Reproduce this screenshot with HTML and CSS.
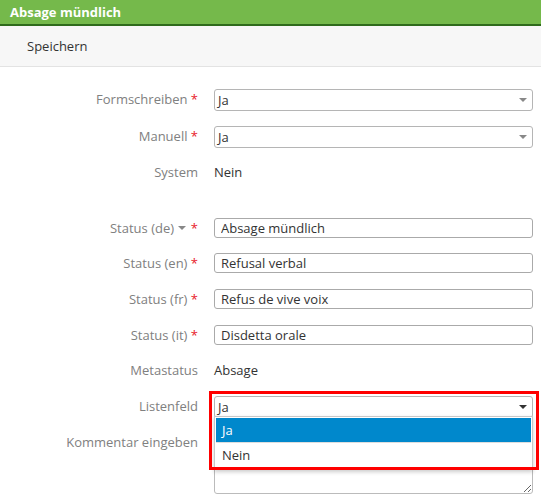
FILE: index.html
```html
<!DOCTYPE html>
<html lang="de">
<head>
  <meta charset="UTF-8">
  <title>Absage mündlich</title>
  <link rel="stylesheet" href="styles.css">
</head>
<body>

  <div class="panel">
    <div class="panel-title">Absage mündlich</div>

    <div class="toolbar">
      <span class="toolbar-btn">Speichern</span>
    </div>

    <div class="form">
      <label class="label">Formschreiben <span class="req">*</span></label>
      <div class="field">
        <div class="select"><span>Ja</span><i class="arrow"></i></div>
      </div>

      <label class="label">Manuell <span class="req">*</span></label>
      <div class="field">
        <div class="select"><span>Ja</span><i class="arrow"></i></div>
      </div>

      <label class="label">System</label>
      <div class="field value">Nein</div>

      <div class="spacer"></div>

      <label class="label">Status (de) <i class="caret"></i> <span class="req">*</span></label>
      <div class="field"><input class="input" type="text" value="Absage mündlich"></div>

      <label class="label">Status (en) <span class="req">*</span></label>
      <div class="field"><input class="input" type="text" value="Refusal verbal"></div>

      <label class="label">Status (fr) <span class="req">*</span></label>
      <div class="field"><input class="input" type="text" value="Refus de vive voix"></div>

      <label class="label">Status (it) <span class="req">*</span></label>
      <div class="field"><input class="input" type="text" value="Disdetta orale"></div>

      <label class="label">Metastatus</label>
      <div class="field value">Absage</div>

      <label class="label">Listenfeld</label>
      <div class="field open">
        <div class="select active"><span>Ja</span><i class="arrow"></i></div>
        <ul class="dropdown">
          <li class="selected">Ja</li>
          <li>Nein</li>
        </ul>
        <div class="highlight"></div>
      </div>

      <label class="label">Kommentar eingeben</label>
      <div class="field"><textarea class="comment"></textarea></div>
    </div>
  </div>

</body>
</html>
```

FILE: styles.css
```css
body {
  margin: 0;
  font-family: 'Open Sans', sans-serif;
  font-size: 13px;
  color: #333;
  background: #fff;
}

.panel-title {
  height: 24px;
  line-height: 24px;
  padding: 0 10px;
  background: #75b94b;
  border-bottom: 2px solid #2f6b1c;
  color: #fff;
  font-weight: bold;
  font-size: 13px;
}

.toolbar {
  height: 40px;
  line-height: 40px;
  padding: 0 27px;
  background: #f7f7f7;
  border-bottom: 1px solid #e3e3e3;
  font-size: 13px;
}

.form {
  display: grid;
  grid-template-columns: 198px 1fr;
  column-gap: 16px;
  row-gap: 13.6px;
  padding: 21px 8px 0 0;
}

.label {
  text-align: right;
  line-height: 22px;
  color: #808080;
  white-space: nowrap;
}

.req {
  color: #e8202a;
}

.caret {
  display: inline-block;
  width: 0;
  height: 0;
  margin: 0 1px 2px 1px;
  border-left: 4px solid transparent;
  border-right: 4px solid transparent;
  border-top: 4px solid #888;
  vertical-align: middle;
}

.spacer {
  grid-column: 1 / 3;
  height: 6.5px;
}

.field {
  position: relative;
  min-height: 22px;
}

.value {
  line-height: 22px;
  color: #333;
}

.select {
  position: relative;
  height: 20px;
  line-height: 20px;
  margin-top: 1px;
  padding: 0 3px;
  border: 1px solid #b5b5b5;
  border-radius: 3px;
  background: #fff;
}

.arrow {
  position: absolute;
  right: 5px;
  top: 8px;
  width: 0;
  height: 0;
  border-left: 4px solid transparent;
  border-right: 4px solid transparent;
  border-top: 4px solid #888;
}

.select.active .arrow {
  border-top-color: #333;
}

.input {
  box-sizing: border-box;
  display: block;
  width: 100%;
  height: 20px;
  margin: 1px 0 0;
  padding: 0 6px;
  border: 1px solid #aaa;
  border-radius: 3px;
  font-family: 'Open Sans', sans-serif;
  font-size: 13px;
  color: #333;
}

.comment {
  box-sizing: border-box;
  display: block;
  width: 100%;
  height: 63px;
  margin: 0;
  border: 1px solid #bbb;
  border-radius: 3px;
  font-family: 'Open Sans', sans-serif;
  font-size: 13px;
}

.open {
  z-index: 2;
}

.dropdown {
  position: absolute;
  left: 0;
  right: 0;
  top: 21px;
  margin: 0;
  padding: 1px;
  list-style: none;
  background: #fff;
  border: 1px solid #c8c8c8;
  box-shadow: 0 2px 4px rgba(0,0,0,0.2);
}

.dropdown li {
  height: 24px;
  line-height: 24px;
  padding: 0 6px;
  border-bottom: 1px solid #ddd;
}

.dropdown li.selected {
  background: #0088cc;
  color: #fff;
}

.highlight {
  position: absolute;
  left: -5px;
  right: -6px;
  top: -4px;
  height: 79px;
  border: 3px solid #f00;
  box-sizing: border-box;
}
```
